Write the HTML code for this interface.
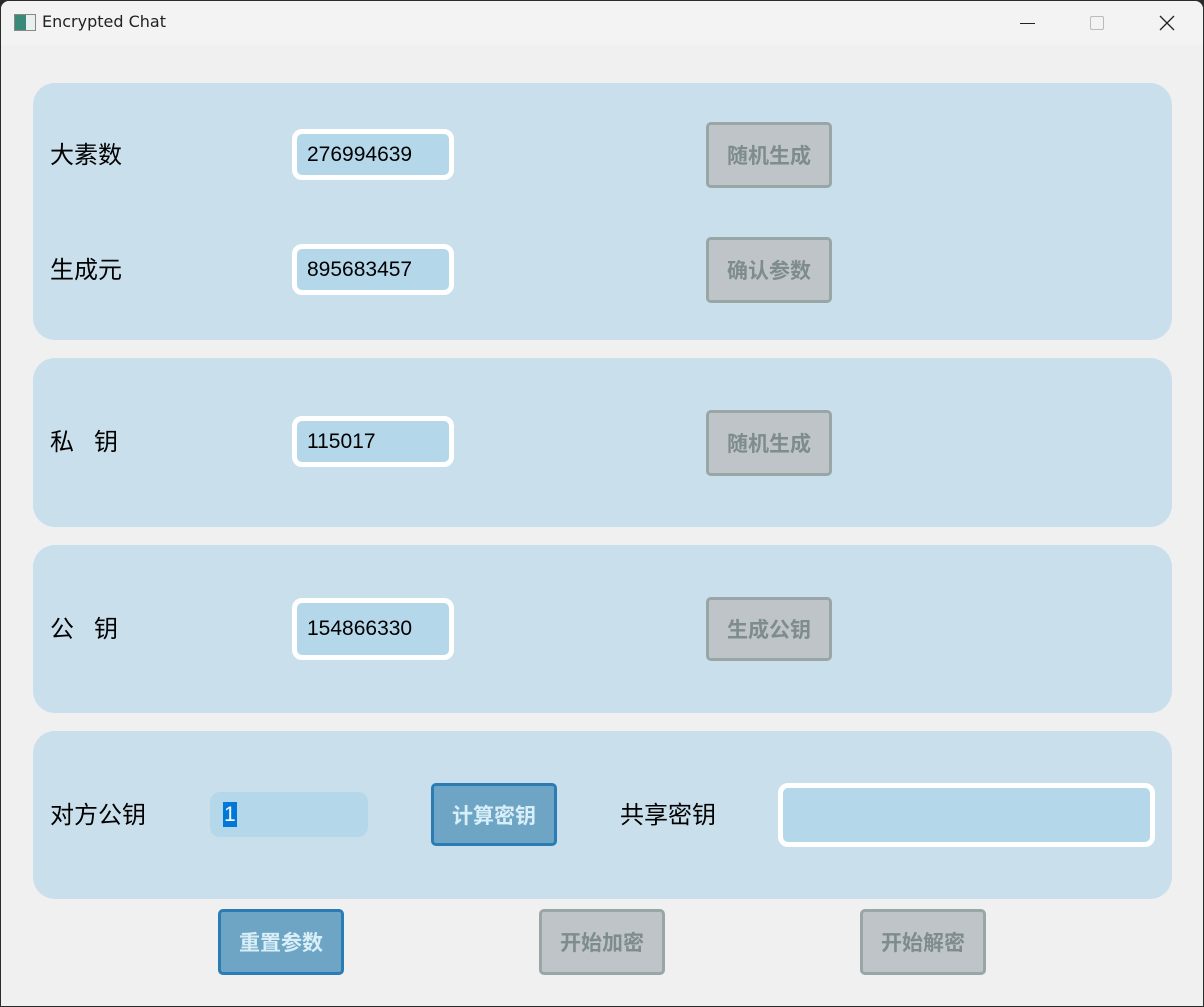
<!DOCTYPE html>
<html><head><meta charset="utf-8"><style>
*{box-sizing:border-box;margin:0;padding:0}
body{width:1204px;height:1007px;background:#2b2b2b;font-family:"Liberation Sans","Noto Sans CJK SC",sans-serif;overflow:hidden;position:relative}
.win{position:absolute;left:1px;top:1px;width:1202px;height:1005px;background:#f0f0f0;border-radius:8px 8px 0 0;overflow:hidden}
.title{position:absolute;left:0;top:0;width:100%;height:44px;background:#f3f3f3}
.abs{position:absolute}
.panel{position:absolute;left:32px;width:1139px;background:#c9dfeb;border-radius:22px}
.lbl{position:absolute;font-size:24px;color:#000;line-height:28px}
.inp{position:absolute;background:#b4d8ea;border:5px solid #fff;border-radius:10px;font-size:21px;padding-left:10px;display:flex;align-items:center;color:#000}
.btn{position:absolute;width:126px;background:#bec4c8;border:3px solid #98a6a6;border-radius:5px;color:#7f8c8d;font-weight:bold;font-size:21px;display:flex;align-items:center;justify-content:center}
.blue{background:#6fa5c4;border-color:#2b7bb4;color:#d8eef8}
</style></head><body>
<div class="win">
<div class="title">
<div class="abs" style="left:13px;top:13px;width:22px;height:17px;border:1px solid #888;background:linear-gradient(90deg,#3a8a7a 0 55%,#e8f0f0 55%)"></div>
<div class="abs" style="left:41px;top:11px;color:#222;font-family:'DejaVu Sans',sans-serif;font-size:16px">Encrypted Chat</div>
<div class="abs" style="left:1019px;top:22px;width:15px;height:1px;background:#222"></div>
<div class="abs" style="left:1089px;top:15px;width:14px;height:14px;border:1px solid #bbb;border-radius:2px"></div>
<svg class="abs" style="left:1158px;top:14px" width="16" height="16"><path d="M1 1L15 15M15 1L1 15" stroke="#222" stroke-width="1.3"/></svg>
</div>
<div class="panel" style="top:82px;height:257px"></div>
<div class="panel" style="top:357px;height:169px"></div>
<div class="panel" style="top:544px;height:168px"></div>
<div class="panel" style="top:730px;height:168px"></div>

<div class="lbl" style="left:49px;top:141px">大素数</div>
<div class="inp" style="left:291px;top:128px;width:162px;height:51px">276994639</div>
<div class="btn" style="left:705px;top:121px;height:66px">随机生成</div>

<div class="lbl" style="left:49px;top:256px">生成元</div>
<div class="inp" style="left:291px;top:243px;width:162px;height:51px">895683457</div>
<div class="btn" style="left:705px;top:236px;height:66px">确认参数</div>

<div class="lbl" style="left:49px;top:428px">私&nbsp;&nbsp;&nbsp;钥</div>
<div class="inp" style="left:291px;top:415px;width:162px;height:51px">115017</div>
<div class="btn" style="left:705px;top:409px;height:66px">随机生成</div>

<div class="lbl" style="left:49px;top:615px">公&nbsp;&nbsp;&nbsp;钥</div>
<div class="inp" style="left:291px;top:597px;width:162px;height:62px">154866330</div>
<div class="btn" style="left:705px;top:596px;height:64px">生成公钥</div>

<div class="lbl" style="left:49px;top:801px">对方公钥</div>
<div class="abs" style="left:209px;top:791px;width:158px;height:45px;background:#b4d8ea;border-radius:10px"><span style="position:absolute;left:13px;top:10px;background:#0078d7;color:#fff;font-size:21px;line-height:25px;padding:0 1px">1</span></div>
<div class="btn blue" style="left:430px;top:782px;height:63px">计算密钥</div>
<div class="lbl" style="left:619px;top:801px">共享密钥</div>
<div class="inp" style="left:777px;top:782px;width:377px;height:64px"></div>

<div class="btn blue" style="left:217px;top:908px;height:66px">重置参数</div>
<div class="btn" style="left:538px;top:908px;height:66px">开始加密</div>
<div class="btn" style="left:859px;top:908px;height:66px">开始解密</div>
</div>
</body></html>
